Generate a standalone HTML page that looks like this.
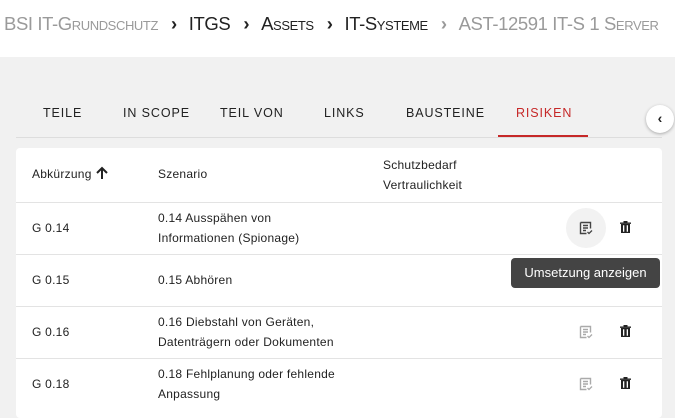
<!DOCTYPE html>
<html><head><style>
*{margin:0;padding:0;box-sizing:border-box}
body{width:675px;height:407px;overflow:hidden;background:#f1f1f1;font-family:"Liberation Sans",Roboto,sans-serif;position:relative}
.hdr{position:absolute;left:0;top:0;width:675px;height:57px;background:#fff}
.bc{position:absolute;top:12px;left:4px;font-size:18.5px;white-space:nowrap;font-variant:small-caps;letter-spacing:-0.4px}
.bc span{vertical-align:middle}
.g{color:#9a9a9a}.d{color:#222}
.ch{display:inline-block;margin:0 12px 0 13px;font-weight:bold;font-variant:normal}
.tabs{position:absolute;top:106px;left:0;font-size:12.5px;letter-spacing:0.9px;color:#222}
.tabs span{position:absolute;white-space:nowrap}
.tl{position:absolute;left:16px;top:137px;width:646px;height:1px;background:#ddd}
.ul{position:absolute;left:498px;top:135px;width:90px;height:2px;background:#c62828}
.btn{position:absolute;left:646px;top:105px;width:28px;height:28px;border-radius:50%;background:#fff;box-shadow:0 1px 3px rgba(0,0,0,.3);font-size:14px;text-align:center;line-height:27px;font-weight:bold;color:#222}
.card{position:absolute;left:16px;top:148px;width:646px;height:270px;background:#fff;border-radius:4px}
.row{position:absolute;left:0;width:646px;border-top:1px solid #e3e3e3;font-size:12px;color:#222;letter-spacing:0.25px}
.c{position:absolute;line-height:20px}
.tip{position:absolute;left:511px;top:258px;width:149px;height:30px;background:#444;border-radius:4px;color:#fff;font-size:13px;text-align:center;line-height:30px}
.ic{position:absolute}
</style></head><body>
<div class="hdr"><div class="bc"><span class="g">BSI IT-Grundschutz</span><span class="ch d">›</span><span class="d">ITGS</span><span class="ch d">›</span><span class="d">Assets</span><span class="ch d">›</span><span class="d">IT-Systeme</span><span class="ch g">›</span><span class="g">AST-12591 IT-S 1 Server</span></div></div>
<div class="tabs">
<span style="left:43px">TEILE</span><span style="left:123px">IN SCOPE</span><span style="left:220px">TEIL VON</span><span style="left:324px">LINKS</span><span style="left:406px">BAUSTEINE</span><span style="left:516px;color:#c62828">RISIKEN</span></div>
<div class="tl"></div><div class="ul"></div>
<div class="btn">‹</div>
<div class="card">
<div class="row" style="top:0;border-top:none;height:54px"><div class="c" style="left:16px;top:16px">Abkürzung <svg width="14" height="14" viewBox="0 0 14 14" style="vertical-align:-2px"><path d="M7 13V2M2 7l5-5 5 5" stroke="#222" stroke-width="2" fill="none"/></svg></div><div class="c" style="left:142px;top:16px">Szenario</div><div class="c" style="left:367px;top:7px">Schutzbedarf<br>Vertraulichkeit</div></div>
<div class="row" style="top:54px;height:52px"><div class="c" style="left:16px;top:15px">G 0.14</div><div class="c" style="left:142px;top:5px">0.14 Ausspähen von<br>Informationen (Spionage)</div>
<div class="ic" style="left:550px;top:5px;width:40px;height:40px;border-radius:50%;background:#f2f2f2"></div></div>
<div class="row" style="top:106px;height:52px"><div class="c" style="left:16px;top:15px">G 0.15</div><div class="c" style="left:142px;top:15px">0.15 Abhören</div></div>
<div class="row" style="top:158px;height:52px"><div class="c" style="left:16px;top:15px">G 0.16</div><div class="c" style="left:142px;top:5px">0.16 Diebstahl von Geräten,<br>Datenträgern oder Dokumenten</div></div>
<div class="row" style="top:210px;height:52px"><div class="c" style="left:16px;top:15px">G 0.18</div><div class="c" style="left:142px;top:5px">0.18 Fehlplanung oder fehlende<br>Anpassung</div></div>
</div>
<svg width="675" height="407" style="position:absolute;left:0;top:0" fill="none">
<defs>
<g id="doc"><path d="M0.5 0.5h10v6M0.5 0.5v11h6M3 3.5h5M3 6h5M3 8.5h3" stroke-width="1.4"/><path d="M7.5 10l1.5 1.5 3-3" stroke-width="1.3"/></g>
<g id="bin" fill="#222"><path d="M0 1.5h11v1.4H0zM3.5 0h4v1.5h-4zM1 3h9v9H1z"/><path d="M3 4.3h1.3v6.4H3zM6.7 4.3H8v6.4H6.7z" fill="#fff"/></g>
</defs>
<use href="#doc" x="580" y="222" stroke="#444"/>
<use href="#bin" x="620" y="221"/>
<use href="#doc" x="580" y="326" stroke="#aaa"/>
<use href="#bin" x="620" y="325"/>
<use href="#doc" x="580" y="378" stroke="#aaa"/>
<use href="#bin" x="620" y="377"/>
</svg>
<div class="tip">Umsetzung anzeigen</div>
</body></html>
